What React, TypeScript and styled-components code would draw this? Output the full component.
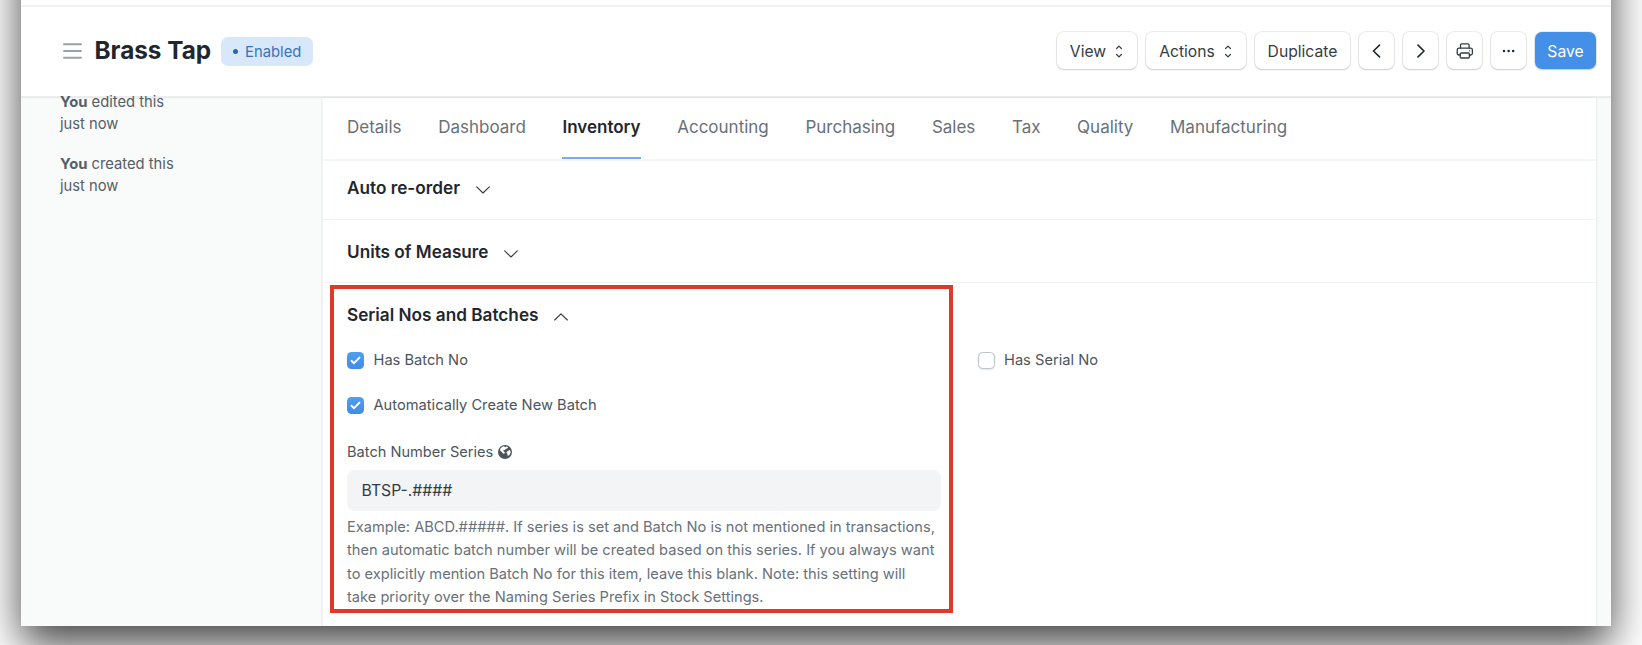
import React from "react";
import styled, { createGlobalStyle, css } from "styled-components";

const GlobalStyle = createGlobalStyle`
  * { box-sizing: border-box; }
  body {
    margin: 0;
    background: #fff;
    font-family: Inter, "Liberation Sans", sans-serif;
    color: #1f272e;
  }
`;

const Desktop = styled.div`
  height: 645px;
  overflow: hidden;
  padding: 0 31px 19px 21px;
`;

const Window = styled.div`
  display: flex;
  flex-direction: column;
  height: 706px;
  margin-top: -80px;
  padding-top: 80px;
  background: #f9fafa;
  box-shadow: 0 19px 40px rgba(0, 0, 0, 0.72);
`;

const NavbarEdge = styled.div`
  flex: none;
  height: 7px;
  background: #fff;
  border-bottom: 2px solid #f0f1f2;
`;

const PageHead = styled.header`
  flex: none;
  display: flex;
  align-items: center;
  justify-content: space-between;
  height: 90px;
  padding: 0 15px 4px 42px;
  background: #fff;
  border-bottom: 1px solid #ecedef;
  box-shadow: 0 1px 1px rgba(25, 39, 52, 0.07);
`;

const TitleArea = styled.div`
  display: flex;
  align-items: center;
`;

const MenuIcon = styled.svg`
  width: 19px;
  height: 16px;
  margin-top: 2px;
`;

const Title = styled.h1`
  margin: 0 0 0 12.5px;
  font-size: 24.3px;
  line-height: 30px;
  font-weight: 700;
`;

const StatusPill = styled.span`
  display: flex;
  align-items: center;
  gap: 7px;
  height: 29px;
  margin: 4px 0 0 10px;
  padding: 0 12px;
  border-radius: 7px;
  background: #d8e8fa;
  color: #3a72b8;
  font-size: 14.8px;

  &::before {
    content: "";
    width: 5px;
    height: 5px;
    border-radius: 50%;
    background: #2a66b0;
  }
`;

const Actions = styled.div`
  display: flex;
  gap: 9px;
  padding-top: 2px;
`;

const Button = styled.button<{ $width: number; $primary?: boolean }>`
  display: flex;
  align-items: center;
  justify-content: center;
  gap: 9px;
  width: ${(p) => p.$width}px;
  height: 37px;
  padding: 1px 0 0;
  border: 0;
  border-radius: 7px;
  background: #fff;
  color: #333c44;
  font: 400 15.7px Inter, "Liberation Sans", sans-serif;
  box-shadow: 0 0 0 1px rgba(0, 0, 0, 0.07), 0 1px 2px rgba(0, 0, 0, 0.14);
  ${(p) =>
    p.$primary &&
    css`
      background: #4490e8;
      color: #fff;
    `}
`;

const Body = styled.div`
  flex: 1;
  display: flex;
  min-height: 0;
  padding: 1px 15px 0 0;
`;

const Sidebar = styled.aside`
  width: 300px;
  color: #545e67;
  font-size: 14.75px;
  line-height: 22px;
`;

const Activity = styled.p`
  margin: 0 0 18px 39px;
  width: 130px;

  &:first-child {
    margin-top: -7px;
  }
`;

const Card = styled.main`
  position: relative;
  flex: 1;
  background: #fff;
  border-left: 2px solid #f1f3f3;
  box-shadow: 1px 0 2px rgba(0, 0, 0, 0.07);
`;

const TabBar = styled.nav`
  display: flex;
  gap: 36.6px;
  height: 63px;
  padding-left: 24px;
  border-bottom: 2px solid #f4f5f6;
`;

const Tab = styled.a<{ $active?: boolean }>`
  height: 61px;
  padding-top: 17px;
  border-bottom: 2px solid ${(p) => (p.$active ? "#71aef3" : "transparent")};
  color: ${(p) => (p.$active ? "#1f272e" : "#687178")};
  font-size: 17px;
  font-weight: ${(p) => (p.$active ? 600 : 400)};
  line-height: 24px;
`;

const Section = styled.section<{ $height: number; $top: number; $last?: boolean }>`
  height: ${(p) => p.$height}px;
  padding: ${(p) => p.$top}px 24px 0;
  border-bottom: ${(p) => (p.$last ? 0 : 1)}px solid #f0f1f2;
`;

const SectionTitle = styled.h2`
  display: flex;
  align-items: center;
  gap: 15.8px;
  margin: 0;
  font-size: 17.2px;
  font-weight: 600;
  line-height: 24px;

  svg {
    margin-top: 3px;
  }
`;

const Columns = styled.div`
  display: grid;
  grid-template-columns: 594px 1fr;
  column-gap: 36.5px;
  margin-top: 22px;
`;

const CheckField = styled.label`
  display: flex;
  align-items: center;
  gap: 9.5px;
  height: 22px;
  margin-bottom: 23px;
  color: #4c555d;
  font-size: 14.67px;
`;

const CheckBox = styled.span<{ $checked?: boolean }>`
  display: flex;
  align-items: center;
  justify-content: center;
  width: 17px;
  height: 17px;
  border-radius: 4.5px;
  ${(p) =>
    p.$checked
      ? css`
          background: linear-gradient(180deg, #4f9fee, #418be6);
        `
      : css`
          border: 1px solid #bcc3c9;
          background: #fff;
          box-shadow: 0 1px 2px rgba(0, 0, 0, 0.1);
        `}
`;

const FieldLabel = styled.div`
  display: flex;
  align-items: center;
  gap: 4.5px;
  height: 22px;
  margin-top: 25px;
  color: #4c555d;
  font-size: 14.6px;
`;

const Input = styled.div`
  height: 41px;
  margin-top: 7px;
  padding-left: 14.5px;
  border-radius: 8px;
  background: #f3f4f6;
  color: #333c44;
  font-size: 15.75px;
  line-height: 41px;
`;

const Help = styled.p`
  margin: 5px 0 0;
  color: #68717a;
  font-size: 14.63px;
  line-height: 23.4px;
  white-space: nowrap;
`;

const Highlight = styled.div`
  position: absolute;
  left: 7px;
  top: 187px;
  width: 623px;
  height: 328px;
  border: 4px solid #dd3a27;
`;

const Chevron = ({ up }: { up?: boolean }) => (
  <svg width="14" height="8" viewBox="0 0 14 8" fill="none" stroke="#333c44" strokeWidth="1.15" strokeLinecap="round" strokeLinejoin="round">
    <path d={up ? "M.7 7 7 .9 13.3 7" : "M.7 .9 7 7 13.3 .9"} />
  </svg>
);

const SelectIcon = () => (
  <svg width="9" height="13" viewBox="0 0 9 13" fill="none" stroke="#333c44" strokeWidth="1.2" strokeLinecap="round" strokeLinejoin="round">
    <path d="M1.6 3.5 4 1.1 6.4 3.5M1.6 9.5 4 11.9 6.4 9.5" />
  </svg>
);

const Arrow = ({ right }: { right?: boolean }) => (
  <svg width="10" height="14" viewBox="0 0 10 14" fill="none" stroke="#1f272e" strokeWidth="1.6" strokeLinecap="round" strokeLinejoin="round">
    <path d={right ? "M2 1.1 8 7 2 12.9" : "M7.5 1.1 1.5 7 7.5 12.9"} />
  </svg>
);

const PrinterIcon = () => (
  <svg width="18" height="18" viewBox="0 0 18 18" fill="none" stroke="#333c44" strokeWidth="1.3" strokeLinejoin="round" strokeLinecap="round">
    <path d="M4.5 6V3a1.2 1.2 0 0 1 1.2-1.2h6.2A1.2 1.2 0 0 1 13.1 3v3" />
    <path d="M4.2 13H3a1.8 1.8 0 0 1-1.8-1.8V8A1.8 1.8 0 0 1 3 6.2h11.6A1.8 1.8 0 0 1 16.4 8v3.2a1.8 1.8 0 0 1-1.8 1.8h-1.2" />
    <rect x="4.2" y="11" width="9.2" height="5" rx="1.2" />
    <path d="M13.6 8.8h.1" />
  </svg>
);

const DotsIcon = () => (
  <svg width="14" height="4" viewBox="0 0 14 4" fill="#1f272e">
    <circle cx="2" cy="2" r="1.25" />
    <circle cx="6.6" cy="2" r="1.25" />
    <circle cx="11.2" cy="2" r="1.25" />
  </svg>
);

const Tick = () => (
  <svg width="11" height="9" viewBox="0 0 11 9" fill="none" stroke="#fff" strokeWidth="1.9" strokeLinecap="round" strokeLinejoin="round">
    <path d="M1.5 4.8 4 7.2 9.5 1.6" />
  </svg>
);

const GlobeIcon = () => (
  <svg width="14" height="14" viewBox="0 0 14 14">
    <circle cx="7" cy="7" r="7" fill="#4c555d" />
    <path fill="#fff" d="M2 4.2C3 2.6 4.4 1.6 6 1.3L7.2 2.2 8.4 1.5 10.2 2.2 9 3.6 7.8 3.9 6.6 5 5.2 5.6 5.6 6.6 7 7.2 6.2 8.8 5 8.6 3.6 6.8 2.4 6zM11.8 5 12.8 7.2 11.4 10 9.8 11 9.4 9 8.4 7.8 9.6 6z" />
  </svg>
);

const tabs = ["Details", "Dashboard", "Inventory", "Accounting", "Purchasing", "Sales", "Tax", "Quality", "Manufacturing"];

export default function App() {
  return (
    <Desktop>
      <GlobalStyle />
      <Window>
        <NavbarEdge />
        <PageHead>
          <TitleArea>
            <MenuIcon viewBox="0 0 19 16" stroke="#98a1a9" strokeWidth="1.9" strokeLinecap="round">
              <path d="M1 1.2h17M1 8h17M1 14.8h17" />
            </MenuIcon>
            <Title>Brass Tap</Title>
            <StatusPill>Enabled</StatusPill>
          </TitleArea>
          <Actions>
            <Button $width={80}>View <SelectIcon /></Button>
            <Button $width={100}>Actions <SelectIcon /></Button>
            <Button $width={95}>Duplicate</Button>
            <Button $width={35} aria-label="Previous"><Arrow /></Button>
            <Button $width={35} aria-label="Next"><Arrow right /></Button>
            <Button $width={35} aria-label="Print"><PrinterIcon /></Button>
            <Button $width={35} aria-label="More"><DotsIcon /></Button>
            <Button $width={61} $primary>Save</Button>
          </Actions>
        </PageHead>
        <Body>
          <Sidebar>
            <Activity><b>You</b> edited this<br />just now</Activity>
            <Activity><b>You</b> created this<br />just now</Activity>
          </Sidebar>
          <Card>
            <TabBar>
              {tabs.map((t) => (
                <Tab key={t} $active={t === "Inventory"}>{t}</Tab>
              ))}
            </TabBar>
            <Section $height={59} $top={15}>
              <SectionTitle>Auto re-order <Chevron /></SectionTitle>
            </Section>
            <Section $height={63} $top={20}>
              <SectionTitle>Units of Measure <Chevron /></SectionTitle>
            </Section>
            <Section $height={340} $top={20} $last>
              <SectionTitle>Serial Nos and Batches <Chevron up /></SectionTitle>
              <Columns>
                <div>
                  <CheckField><CheckBox $checked><Tick /></CheckBox>Has Batch No</CheckField>
                  <CheckField><CheckBox $checked><Tick /></CheckBox>Automatically Create New Batch</CheckField>
                  <FieldLabel>Batch Number Series <GlobeIcon /></FieldLabel>
                  <Input>BTSP-.####</Input>
                  <Help>
                    Example: ABCD.#####. If series is set and Batch No is not mentioned in transactions,<br />
                    then automatic batch number will be created based on this series. If you always want<br />
                    to explicitly mention Batch No for this item, leave this blank. Note: this setting will<br />
                    take priority over the Naming Series Prefix in Stock Settings.
                  </Help>
                </div>
                <div>
                  <CheckField><CheckBox />Has Serial No</CheckField>
                </div>
              </Columns>
            </Section>
            <Highlight />
          </Card>
        </Body>
      </Window>
    </Desktop>
  );
}
